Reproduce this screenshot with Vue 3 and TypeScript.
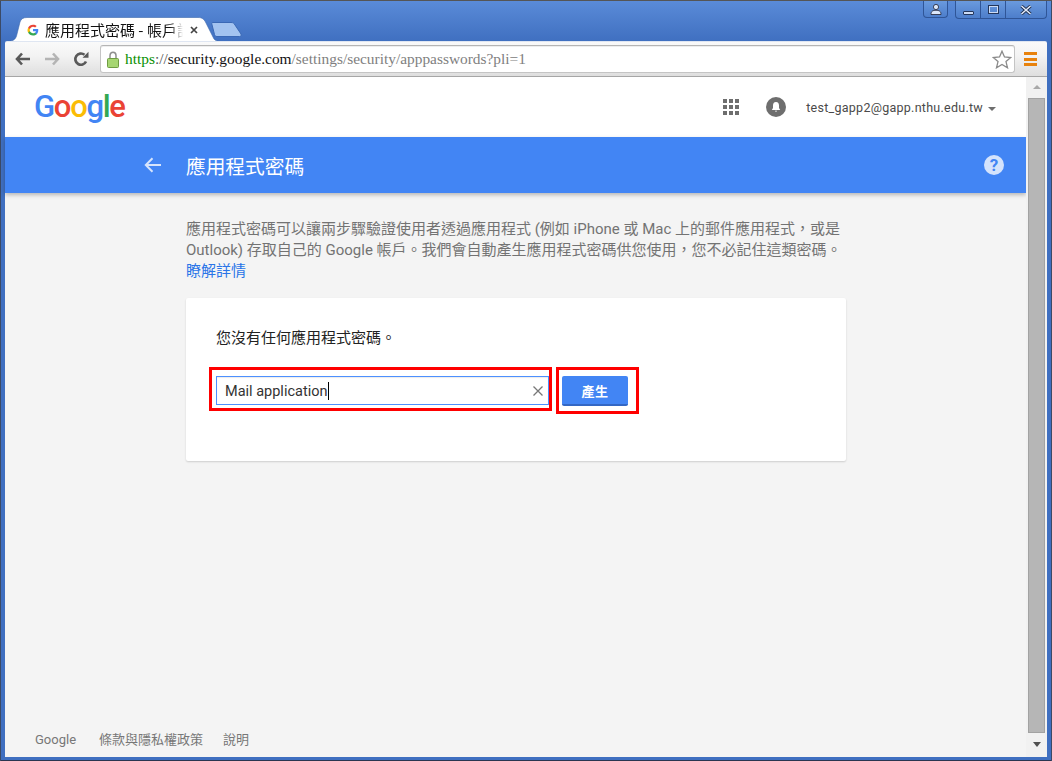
<script setup lang="ts">
const dots: number[] = Array.from({ length: 9 }, (_, i) => i)
</script>

<template>
  <div class="window">
    <div class="titlebar">
      <div class="tab">
        <svg class="tab-shape" width="212" height="25" viewBox="0 0 212 25">
          <path d="M0 24.500 C6 24 8 22 9 17 L12 5 C13 2 15 .5 19 .5 L190 .5 C194 .5 196 2 198 6 L205 20 C206 23 208 24 212 24.500 Z" fill="#fff" stroke="#3d68ad" stroke-width="0.6" />
        </svg>
        <svg class="fav" width="12" height="12" viewBox="0 0 48 48">
          <path fill="#4285F4" d="M45 24.500c0-1.600-.15-3.100-.4-4.500H24v8.500h11.800c-.5 2.700-2 5-4.400 6.600v5.500h7.100C42.700 36.700 45 31.100 45 24.500z" />
          <path fill="#34A853" d="M24 46c5.900 0 10.900-2 14.500-5.400l-7.100-5.500c-2 1.300-4.500 2.100-7.400 2.100-5.700 0-10.500-3.800-12.200-9H4.500v5.700C8.100 41 15.500 46 24 46z" />
          <path fill="#FBBC05" d="M11.800 28.700c-.4-1.300-.7-2.700-.7-4.200s.3-2.900.7-4.200v-5.700H4.500C3 17.600 2 20.900 2 24.500s1 6.900 2.500 9.900l7.300-5.700z" />
          <path fill="#EA4335" d="M24 11.100c3.200 0 6.100 1.100 8.400 3.300l6.300-6.300C34.900 4.500 29.900 2.500 24 2.500 15.500 2.500 8.100 7.500 4.500 14.600l7.300 5.700c1.700-5.200 6.500-9.200 12.200-9.200z" />
        </svg>
        <span class="tab-title">應用程式密碼 - 帳戶設定</span>
        <svg class="tab-close" width="8" height="8" viewBox="0 0 8 8"><path d="M1 1l6 6M7 1L1 7" stroke="#444" stroke-width="1.700" /></svg>
      </div>
      <svg class="newtab" width="31" height="15" viewBox="0 0 31 15">
        <path d="M.7 1.500 C.7 .8 1.200 .5 2 .5 L20 .5 C22 .5 23 1 24 3 L30 12 C30.500 13.500 30 14.500 28.500 14.500 L6 14.500 C4.500 14.500 4 14 3.500 12.500 Z" fill="#a3c3f0" stroke="#3a68b5" />
      </svg>
      <div class="controls">
        <div class="ctl ctl-user">
          <svg width="12" height="11" viewBox="0 0 12 11"><circle cx="6" cy="3" r="2.600" fill="#dbe7fa" stroke="#223" stroke-width=".8" /><path d="M1 10.500 C1 7 3 6.300 6 6.300 S11 7 11 10.500 Z" fill="#dbe7fa" stroke="#223" stroke-width=".8" /></svg>
        </div>
        <div class="ctl-group">
          <div class="ctl ctl-min"><span class="min-bar"></span></div>
          <div class="ctl ctl-max"><span class="max-box"></span></div>
          <div class="ctl ctl-close">
            <svg width="12" height="10" viewBox="0 0 12 10"><path d="M1.500 1l9 8M10.500 1l-9 8" stroke="#1d2b46" stroke-width="3.200" /><path d="M1.500 1l9 8M10.500 1l-9 8" stroke="#dfe9fa" stroke-width="1.600" /></svg>
          </div>
        </div>
      </div>
    </div>

    <div class="toolbar">
      <svg class="nav nav-back" width="16" height="14" viewBox="0 0 16 14"><path d="M7 1.500 L2 7 L7 12.500 M2.500 7 H15" fill="none" stroke="#595959" stroke-width="2.600" /></svg>
      <svg class="nav nav-fwd" width="16" height="14" viewBox="0 0 16 14"><path d="M9 1.500 L14 7 L9 12.500 M13.500 7 H1" fill="none" stroke="#b4b4b4" stroke-width="2.600" /></svg>
      <svg class="nav nav-reload" width="16" height="16" viewBox="0 0 16 16"><path d="M13 10.500 A5.600 5.600 0 1 1 11.500 3.800" fill="none" stroke="#595959" stroke-width="2.700" /><path d="M9.500 6.800 H15.500 V.8 Z" fill="#595959" /></svg>
      <div class="omnibox">
        <svg class="lock" width="12" height="17" viewBox="0 0 12 17"><path d="M3 8 V4.500 C3 2.500 4.300 1.200 6 1.200 S9 2.500 9 4.500 V8" fill="none" stroke="#8f8f8f" stroke-width="1.500" /><rect x=".5" y="7.500" width="11" height="9" rx="1" fill="#a6d672" stroke="#6f9c43" /></svg>
        <span class="url"><span class="https">https</span><span class="slashes">://</span><span class="host">security.google.com</span><span class="path">/settings/security/apppasswords?pli=1</span></span>
        <svg class="star" width="20" height="19" viewBox="0 0 20 19"><path d="M10 1.200 L12.500 7 L18.800 7.500 L14 11.600 L15.500 17.800 L10 14.500 L4.500 17.800 L6 11.600 L1.200 7.500 L7.500 7 Z" fill="#fff" stroke="#8a8a8a" stroke-width="1.300" /></svg>
      </div>
      <div class="menu"><span></span><span></span><span></span></div>
    </div>

    <div class="viewport">
      <div class="page">
        <header class="top">
          <div class="logo"><span class="b">G</span><span class="r">o</span><span class="y">o</span><span class="b">g</span><span class="g">l</span><span class="r">e</span></div>
          <div class="top-right">
            <div class="apps"><i v-for="d in dots" :key="d"></i></div>
            <svg class="bell" width="20" height="20" viewBox="0 0 20 20"><circle cx="10" cy="10" r="10" fill="#6e6e6e" /><path d="M10 5 C7.800 5 7 6.800 7 8.500 V11 L5.800 13 H14.200 L13 11 V8.500 C13 6.800 12.200 5 10 5 Z M8.800 13.800 H11.200 L10 15 Z" fill="#fff" /></svg>
            <span class="email">test_gapp2@gapp.nthu.edu.tw</span>
            <span class="caret"></span>
          </div>
        </header>
        <div class="bluebar">
          <svg class="back" width="18" height="16" viewBox="0 0 18 16"><path d="M8.500 1.200 L1.800 8 L8.500 14.800 M2.500 8 H17" fill="none" stroke="#d6e4fc" stroke-width="2" /></svg>
          <h1 class="title">應用程式密碼</h1>
          <svg class="help" width="20" height="20" viewBox="0 0 20 20"><circle cx="10" cy="10" r="10" fill="#d4e3fc" /><text x="10" y="16" text-anchor="middle" class="help-q">?</text></svg>
        </div>
        <main class="main">
          <p class="intro">應用程式密碼可以讓兩步驟驗證使用者透過應用程式 (例如 iPhone 或 Mac 上的郵件應用程式，或是<br />Outlook) 存取自己的 Google 帳戶。我們會自動產生應用程式密碼供您使用，您不必記住這類密碼。<br /><a class="link">瞭解詳情</a></p>
          <section class="card">
            <p class="none">您沒有任何應用程式密碼。</p>
            <div class="row">
              <div class="redbox redbox-input">
                <div class="input"><span class="value">Mail application</span><span class="cursor"></span>
                  <svg class="clear" width="10" height="10" viewBox="0 0 10 10"><path d="M.5 .5l9 9M9.500 .5l-9 9" stroke="#777" stroke-width="1.300" /></svg>
                </div>
              </div>
              <div class="redbox redbox-btn"><button class="btn">產生</button></div>
            </div>
          </section>
        </main>
        <footer class="foot">
          <span class="foot-g">Google</span><span class="foot-t">條款與隱私權政策</span><span>說明</span>
        </footer>
      </div>
      <div class="scroll">
        <span class="arrow up"></span>
        <div class="thumb"></div>
        <span class="arrow down"></span>
      </div>
    </div>
  </div>
</template>

<style scoped>
.window { width: 1052px; height: 761px; box-sizing: border-box; display: flex; flex-direction: column; overflow: hidden; padding: 1px 5px 4px 5px; background: linear-gradient(#5a8bd8 0, #3f6fc0 41px, #3f6fc0 100%); border-top: 1px solid #555; box-shadow: inset 1px 0 #3b4a66, inset -1px 0 #3b4a66, inset 0 -1px #2a3550; font-family: "Roboto", "Noto Sans CJK TC", sans-serif; }
.titlebar { height: 39px; flex: none; display: flex; align-items: flex-start; position: relative; padding-left: 8px; }
.tab { position: relative; width: 199px; height: 25px; margin-top: 15px; display: flex; align-items: center; padding-left: 14px; box-sizing: border-box; }
.tab-shape { position: absolute; left: -5px; top: 0; }
.fav { position: relative; margin-right: 6px; flex: none; }
.tab-title { position: relative; font: 15px "Noto Sans CJK TC", sans-serif; width: 138px; overflow: hidden; white-space: nowrap; color: #111; -webkit-mask-image: linear-gradient(90deg, #000 125px, transparent 138px); mask-image: linear-gradient(90deg, #000 125px, transparent 138px); }
.tab-close { position: relative; margin-left: 7px; }
.newtab { margin: 20px 0 0 -1px; flex: none; }
.controls { margin-left: auto; display: flex; gap: 7px; margin-right: -5px; padding-right: 5px; margin-top: -1px; }
.ctl { height: 17px; display: flex; align-items: center; justify-content: center; box-sizing: border-box; }
.ctl-user { width: 25px; border: 1px solid #2f5597; border-top: 0; border-radius: 0 0 4px 4px; background: linear-gradient(#6a9ade, #4d7ecb); }
.ctl-group { display: flex; border: 1px solid #2f5597; border-top: 0; border-radius: 0 0 4px 4px; overflow: hidden; background: linear-gradient(#6a9ade, #4d7ecb); }
.ctl-min { width: 25px; border-right: 1px solid #2f5597; align-items: flex-end; padding-bottom: 3px; }
.min-bar { width: 11px; height: 4px; background: #cddcf5; border: 1px solid #24365a; border-radius: 1px; box-sizing: border-box; }
.ctl-max { width: 25px; border-right: 1px solid #2f5597; }
.max-box { width: 11px; height: 9px; border: 2px solid #cddcf5; outline: 1px solid #24365a; outline-offset: -1px; box-sizing: border-box; }
.ctl-close { width: 40px; }
.toolbar { height: 36px; flex: none; display: flex; align-items: center; background: linear-gradient(#fafafa 0, #f3f3f3 40%, #dedede 100%); border-bottom: 1px solid #a6a6a6; box-sizing: border-box; border-top: 1px solid #dfe6f2; border-radius: 2px 2px 0 0; position: relative; padding-left: 10px; }
.nav { flex: none; }
.nav-back { margin-right: 13px; }
.nav-fwd { margin-right: 13px; }
.nav-reload { margin-right: 11px; }
.omnibox { width: 915px; height: 28px; box-sizing: border-box; background: #fff; border: 1px solid #c4c4c4; border-top-color: #b5b5b5; border-radius: 3px; display: flex; align-items: center; padding-left: 6px; box-shadow: inset 0 1px #eee; }
.lock { flex: none; margin-right: 6px; }
.url { font: 15.400px "Liberation Serif", serif; white-space: nowrap; }
.https { color: #078f00; }
.slashes { color: #555; }
.host { color: #111; }
.path { color: #808080; }
.star { margin-left: auto; margin-right: 2px; }
.menu { margin-left: 9px; width: 13px; display: flex; flex-direction: column; gap: 2.500px; }
.menu span { height: 3px; background: #e8820c; }
.viewport { flex: 1; display: flex; min-height: 0; background: #f4f4f4; }
.page { flex: 1; display: flex; flex-direction: column; min-width: 0; }
.top { height: 60px; flex: none; background: #fff; display: flex; align-items: center; padding: 0 30px; justify-content: space-between; }
.logo { font: 500 31px "Roboto", sans-serif; letter-spacing: -1.300px; line-height: 60px; margin-left: -1px; }
.b { color: #4285f4; }
.r { color: #ea4335; }
.y { color: #fbbc05; }
.g { color: #34a853; }
.top-right { display: flex; align-items: center; }
.apps { display: grid; grid-template-columns: repeat(3, 4px); grid-auto-rows: 4px; gap: 2px; width: 16px; margin-right: 27px; }
.apps i { background: #6e6e6e; display: block; }
.bell { margin-right: 20px; }
.email { font-size: 12.500px; letter-spacing: .265px; color: #4a4a4a; }
.caret { width: 0; height: 0; border: 4px solid transparent; border-top-color: #6e6e6e; border-bottom: 0; margin-left: 5px; margin-top: 3px; }
.bluebar { height: 56px; flex: none; display: flex; align-items: center; background: #4285f4; padding-left: 139px; padding-right: 22px; box-shadow: 0 2px 4px rgba(0,0,0,.25); position: relative; }
.back { margin-right: 24px; }
.title { font: 400 19.700px "Noto Sans CJK TC", sans-serif; color: #fff; margin: 0; }
.help { margin-left: auto; }
.help-q { font: 700 17px "Roboto", sans-serif; fill: #4285f4; }
.main { flex: none; width: 660px; margin-left: 181px; padding-top: 26px; }
.intro { margin: 0; font-size: 15px; line-height: 21px; color: #737373; white-space: nowrap; }
.link { color: #2a75e8; }
.card { margin-top: 16px; height: 163px; box-sizing: border-box; background: #fff; border-radius: 2px; box-shadow: 0 1px 2px rgba(0,0,0,.16); padding: 30px 0 0 23px; }
.none { margin: 0 0 0 7px; font-size: 15px; line-height: 21px; color: #222; }
.row { display: flex; align-items: flex-start; margin-top: 18px; gap: 4px; }
.redbox { border: 3px solid #f00; box-sizing: border-box; }
.redbox-input { width: 343px; height: 44px; padding: 6px 0 0 4px; }
.redbox-btn { width: 83px; height: 47px; padding: 6px 0 0 3px; }
.input { width: 333px; height: 29px; box-sizing: border-box; border: 1px solid #4d90fe; background: #fff; display: flex; align-items: center; padding-left: 8px; position: relative; box-shadow: inset 0 1px 1px rgba(0,0,0,.08); }
.value { font-size: 14.500px; color: #333; padding-top: 1px; }
.cursor { width: 1px; height: 18px; background: #000; margin-left: 1px; }
.clear { margin-left: auto; margin-right: 5px; }
.btn { width: 66px; height: 30px; border: 0; border-bottom: 2px solid #3367c4; border-radius: 2px; background: #4285f4; color: #fff; font: 700 13px "Noto Sans CJK TC", sans-serif; letter-spacing: .5px; padding: 0; }
.foot { margin-top: auto; height: 26px; padding-left: 30px; display: flex; gap: 20px; align-items: flex-start; font-size: 13px; line-height: 18px; color: #777; }
.foot-g { margin-right: 3px; }
.scroll { width: 21px; flex: none; background: #f1f1f1; position: relative; display: flex; flex-direction: column; align-items: center; padding-top: 8px; box-sizing: border-box; }
.arrow { width: 0; height: 0; border: 4px solid transparent; flex: none; }
.up { border-bottom: 4px solid #a8a8a8; border-top: 0; }
.thumb { width: 17px; height: 635px; background: #b6b6b6; border: 1px solid #a2a2a2; box-sizing: border-box; margin: 9px 0 9px; }
.down { border-top: 5px solid #505050; border-bottom: 0; }
</style>

<style>
html, body { margin: 0; background: #fff; overflow: hidden; }
</style>
